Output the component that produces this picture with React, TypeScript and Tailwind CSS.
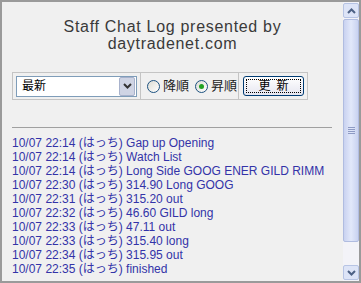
const logs = [
  ['22:14', 'Gap up Opening'],
  ['22:14', 'Watch List'],
  ['22:14', 'Long Side GOOG ENER GILD RIMM'],
  ['22:30', '314.90 Long GOOG'],
  ['22:31', '315.20 out'],
  ['22:32', '46.60 GILD long'],
  ['22:33', '47.11 out'],
  ['22:33', '315.40 long'],
  ['22:34', '315.95 out'],
  ['22:35', 'finished'],
];

const font = { fontFamily: '"Liberation Sans", "Noto Sans CJK JP", sans-serif' };

function Chevron({ up }: { up?: boolean }) {
  return (
    <svg width="9" height="6" viewBox="0 0 9 6">
      <path d={up ? 'M1 5 L4.5 1.5 L8 5' : 'M1 1 L4.5 4.5 L8 1'} fill="none" stroke="#4d6185" strokeWidth="2" />
    </svg>
  );
}

function Radio({ checked, label }: { checked?: boolean; label: string }) {
  return (
    <label className="flex shrink-0 items-center gap-[3px] whitespace-nowrap text-[13px] text-[#222]">
      <span className="flex h-[13px] w-[13px] shrink-0 items-center justify-center rounded-full border border-[#1c5180] bg-gradient-to-br from-[#dcdcd4] to-white">
        {checked && <span className="h-[5px] w-[5px] rounded-full bg-[#21a121]" />}
      </span>
      {label}
    </label>
  );
}

function ScrollBar() {
  return (
    <div className="flex w-[16px] flex-col gap-[1px] bg-[#f3f3f8] py-[1px]">
      <div className="flex h-[15px] items-center justify-center rounded-[2px] border border-[#b7c4e4] bg-[#dde4f7]">
        <Chevron up />
      </div>
      <div className="flex h-[223px] items-center justify-center rounded-[2px] border border-[#b0bce0] bg-gradient-to-r from-[#c9d2f0] via-[#e2e8fa] to-[#c9d2f0]">
        <div className="flex flex-col gap-[1px]">
          <span className="h-px w-[7px] bg-[#8e9ac4]" />
          <span className="h-px w-[7px] bg-[#8e9ac4]" />
          <span className="h-px w-[7px] bg-[#8e9ac4]" />
          <span className="h-px w-[7px] bg-[#8e9ac4]" />
        </div>
      </div>
      <div className="flex-1" />
      <div className="flex h-[15px] items-center justify-center rounded-[2px] border border-[#b7c4e4] bg-[#dde4f7]">
        <Chevron />
      </div>
    </div>
  );
}

export default function App() {
  return (
    <div className="flex h-[283px] w-[361px] border-2 border-[#9a9a9a] bg-[#f0f0f0]" style={font}>
      <div className="w-[341px] pl-[10px] pt-[16px]">
        <div className="pr-[10px] text-center text-[16px] leading-[17px] tracking-[0.7px] text-[#3a3a3a]">
          <p>Staff Chat Log presented by</p>
          <p>daytradenet.com</p>
        </div>

        <div className="mt-[20px] flex h-[28px] w-[296px] border border-[#c4c4c4]">
          <div className="flex w-[127px] items-center pl-[3px]">
            <div className="flex h-[21px] w-[121px] items-center border border-[#7f9db9] bg-white">
              <span className="flex-1 pl-[5px] text-[12px] text-black">最新</span>
              <div className="mr-px flex h-[19px] w-[16px] items-center justify-center rounded-[2px] border border-[#a8b2cc] bg-[#cfd4e4]">
                <svg width="9" height="6" viewBox="0 0 9 6">
                  <path d="M1 1 L4.5 4.5 L8 1" fill="none" stroke="#333" strokeWidth="2" />
                </svg>
              </div>
            </div>
          </div>
          <div className="flex w-[98px] items-center gap-[6px] border-l border-[#c4c4c4] pl-[6px]">
            <Radio label="降順" />
            <Radio checked label="昇順" />
          </div>
          <div className="flex flex-1 items-center border-l border-[#c4c4c4] pl-[4px]">
            <button className="flex h-[20px] w-[61px] items-center justify-center rounded-[3px] border border-[#003c74] bg-gradient-to-b from-white to-[#e6e6f0] p-[2px]">
              <span className="flex h-full w-full items-center justify-center border border-dotted border-black pl-[6px] text-[12px] tracking-[6px] text-black">
                更新
              </span>
            </button>
          </div>
        </div>

        <div className="mt-[27px] h-px w-[320px] bg-[#a0a0a0]" />

        <div className="mt-[8px] text-[12px] leading-[14px] text-[#3333a8]">
          {logs.map(([time, msg], i) => (
            <p key={i} className="whitespace-nowrap">
              10/07 {time} (はっち) {msg}
            </p>
          ))}
        </div>
      </div>
      <ScrollBar />
    </div>
  );
}
